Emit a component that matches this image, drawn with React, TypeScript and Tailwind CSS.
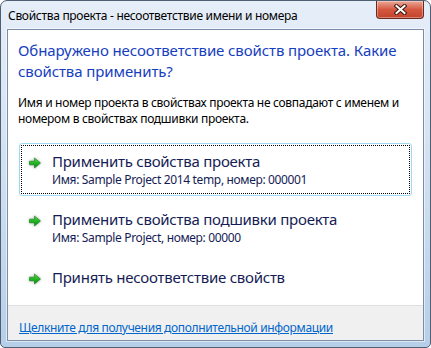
import React from "react";

function GreenArrow() {
  return (
    <svg width="14" height="12" viewBox="0 0 14 12" className="shrink-0 drop-shadow-[0_0_1.5px_rgba(0,0,0,0.35)]">
      <defs>
        <linearGradient id="ga" x1="0" y1="0" x2="0" y2="1">
          <stop offset="0" stopColor="#5fe04c" />
          <stop offset="0.5" stopColor="#21b521" />
          <stop offset="1" stopColor="#0a8a12" />
        </linearGradient>
      </defs>
      <path d="M1.5 4.2 H6.5 V1 L12.5 6 L6.5 11 V7.8 H1.5 Z" fill="url(#ga)" stroke="#0d7f14" strokeWidth="0.6" strokeLinejoin="round" />
    </svg>
  );
}

function CommandLink({ title, note, focused }: { title: string; note?: string; focused?: boolean }) {
  return (
    <div
      className={`relative flex items-start rounded-[3px] border pt-[7px] pb-[7px] pl-[8px] ${
        focused ? "border-[#9fd9f3] bg-white" : "border-transparent"
      }`}
    >
      {focused && <div className="pointer-events-none absolute inset-[1px] rounded-[1px] border border-dotted border-black" />}
      <div className="mt-[6px] w-[24px]">
        <GreenArrow />
      </div>
      <div className="whitespace-nowrap text-[#151c55]">
        <div className="text-[15px] leading-[21px] tracking-[-0.25px]">{title}</div>
        {note && <div className="text-[12px] leading-[16px] tracking-[-0.35px]">{note}</div>}
      </div>
    </div>
  );
}

export default function App() {
  return (
    <div
      className="flex h-[348px] w-[431px] flex-col overflow-hidden rounded-t-[7px] rounded-b-[5px] border border-[#4f5f73] bg-gradient-to-b from-[#e6eef8] via-[#d0e0f1] to-[#b6cee8] px-[6px] pb-[6px]"
      style={{ fontFamily: '"Noto Sans", "Open Sans", sans-serif' }}
    >
      {/* Title bar */}
      <div className="flex h-[28px] shrink-0 items-start justify-between">
        <div className="whitespace-nowrap pl-[1px] pt-[7px] text-[12px] leading-[15px] tracking-[-0.3px] text-black">
          Свойства проекта - несоответствие имени и номера
        </div>
        <div className="flex h-[18px] w-[48px] items-center justify-center rounded-b-[4px] border border-t-0 border-[#6b2a1c] bg-gradient-to-b from-[#e9a99a] via-[#d4573f] to-[#c2432a] shadow-[inset_0_0_0_1px_rgba(255,255,255,0.35)]">
          <svg width="13" height="11" viewBox="0 0 13 11">
            <path d="M2.5 2 L10.5 9 M10.5 2 L2.5 9" stroke="#3c1810" strokeWidth="4" strokeLinecap="square" />
            <path d="M2.5 2 L10.5 9 M10.5 2 L2.5 9" stroke="#ffffff" strokeWidth="2" strokeLinecap="square" />
          </svg>
        </div>
      </div>

      {/* Client area */}
      <div className="flex min-h-0 flex-1 flex-col border border-[#7b8ea6] bg-white shadow-[0_0_0_1px_rgba(255,255,255,0.55)]">
        <div className="min-h-0 flex-1 pl-[10px] pr-[11px] pt-[10px]">
          <div className="whitespace-nowrap text-[15px] leading-[21px] tracking-[-0.1px] text-[#1640c0]">
            Обнаружено несоответствие свойств проекта. Какие
            <br />
            свойства применить?
          </div>
          <div className="mt-[13px] whitespace-nowrap text-[12px] leading-[16px] tracking-[-0.3px] text-black">
            Имя и номер проекта в свойствах проекта не совпадают с именем и
            <br />
            номером в свойствах подшивки проекта.
          </div>
          <div className="ml-[1px] mt-[16px] flex flex-col gap-[5px]">
            <CommandLink focused title="Применить свойства проекта" note="Имя: Sample Project 2014 temp, номер: 000001" />
            <CommandLink title="Применить свойства подшивки проекта" note="Имя: Sample Project, номер: 00000" />
            <CommandLink title="Принять несоответствие свойств" />
          </div>
        </div>
        <div className="h-[35px] shrink-0 border-t border-[#dfdfdf] bg-[#f0f0f0] pl-[11px] pt-[8px]">
          <a className="cursor-pointer whitespace-nowrap text-[12px] leading-[15px] tracking-[-0.35px] text-[#0066cc] underline">
            Щелкните для получения дополнительной информации
          </a>
        </div>
      </div>
    </div>
  );
}
